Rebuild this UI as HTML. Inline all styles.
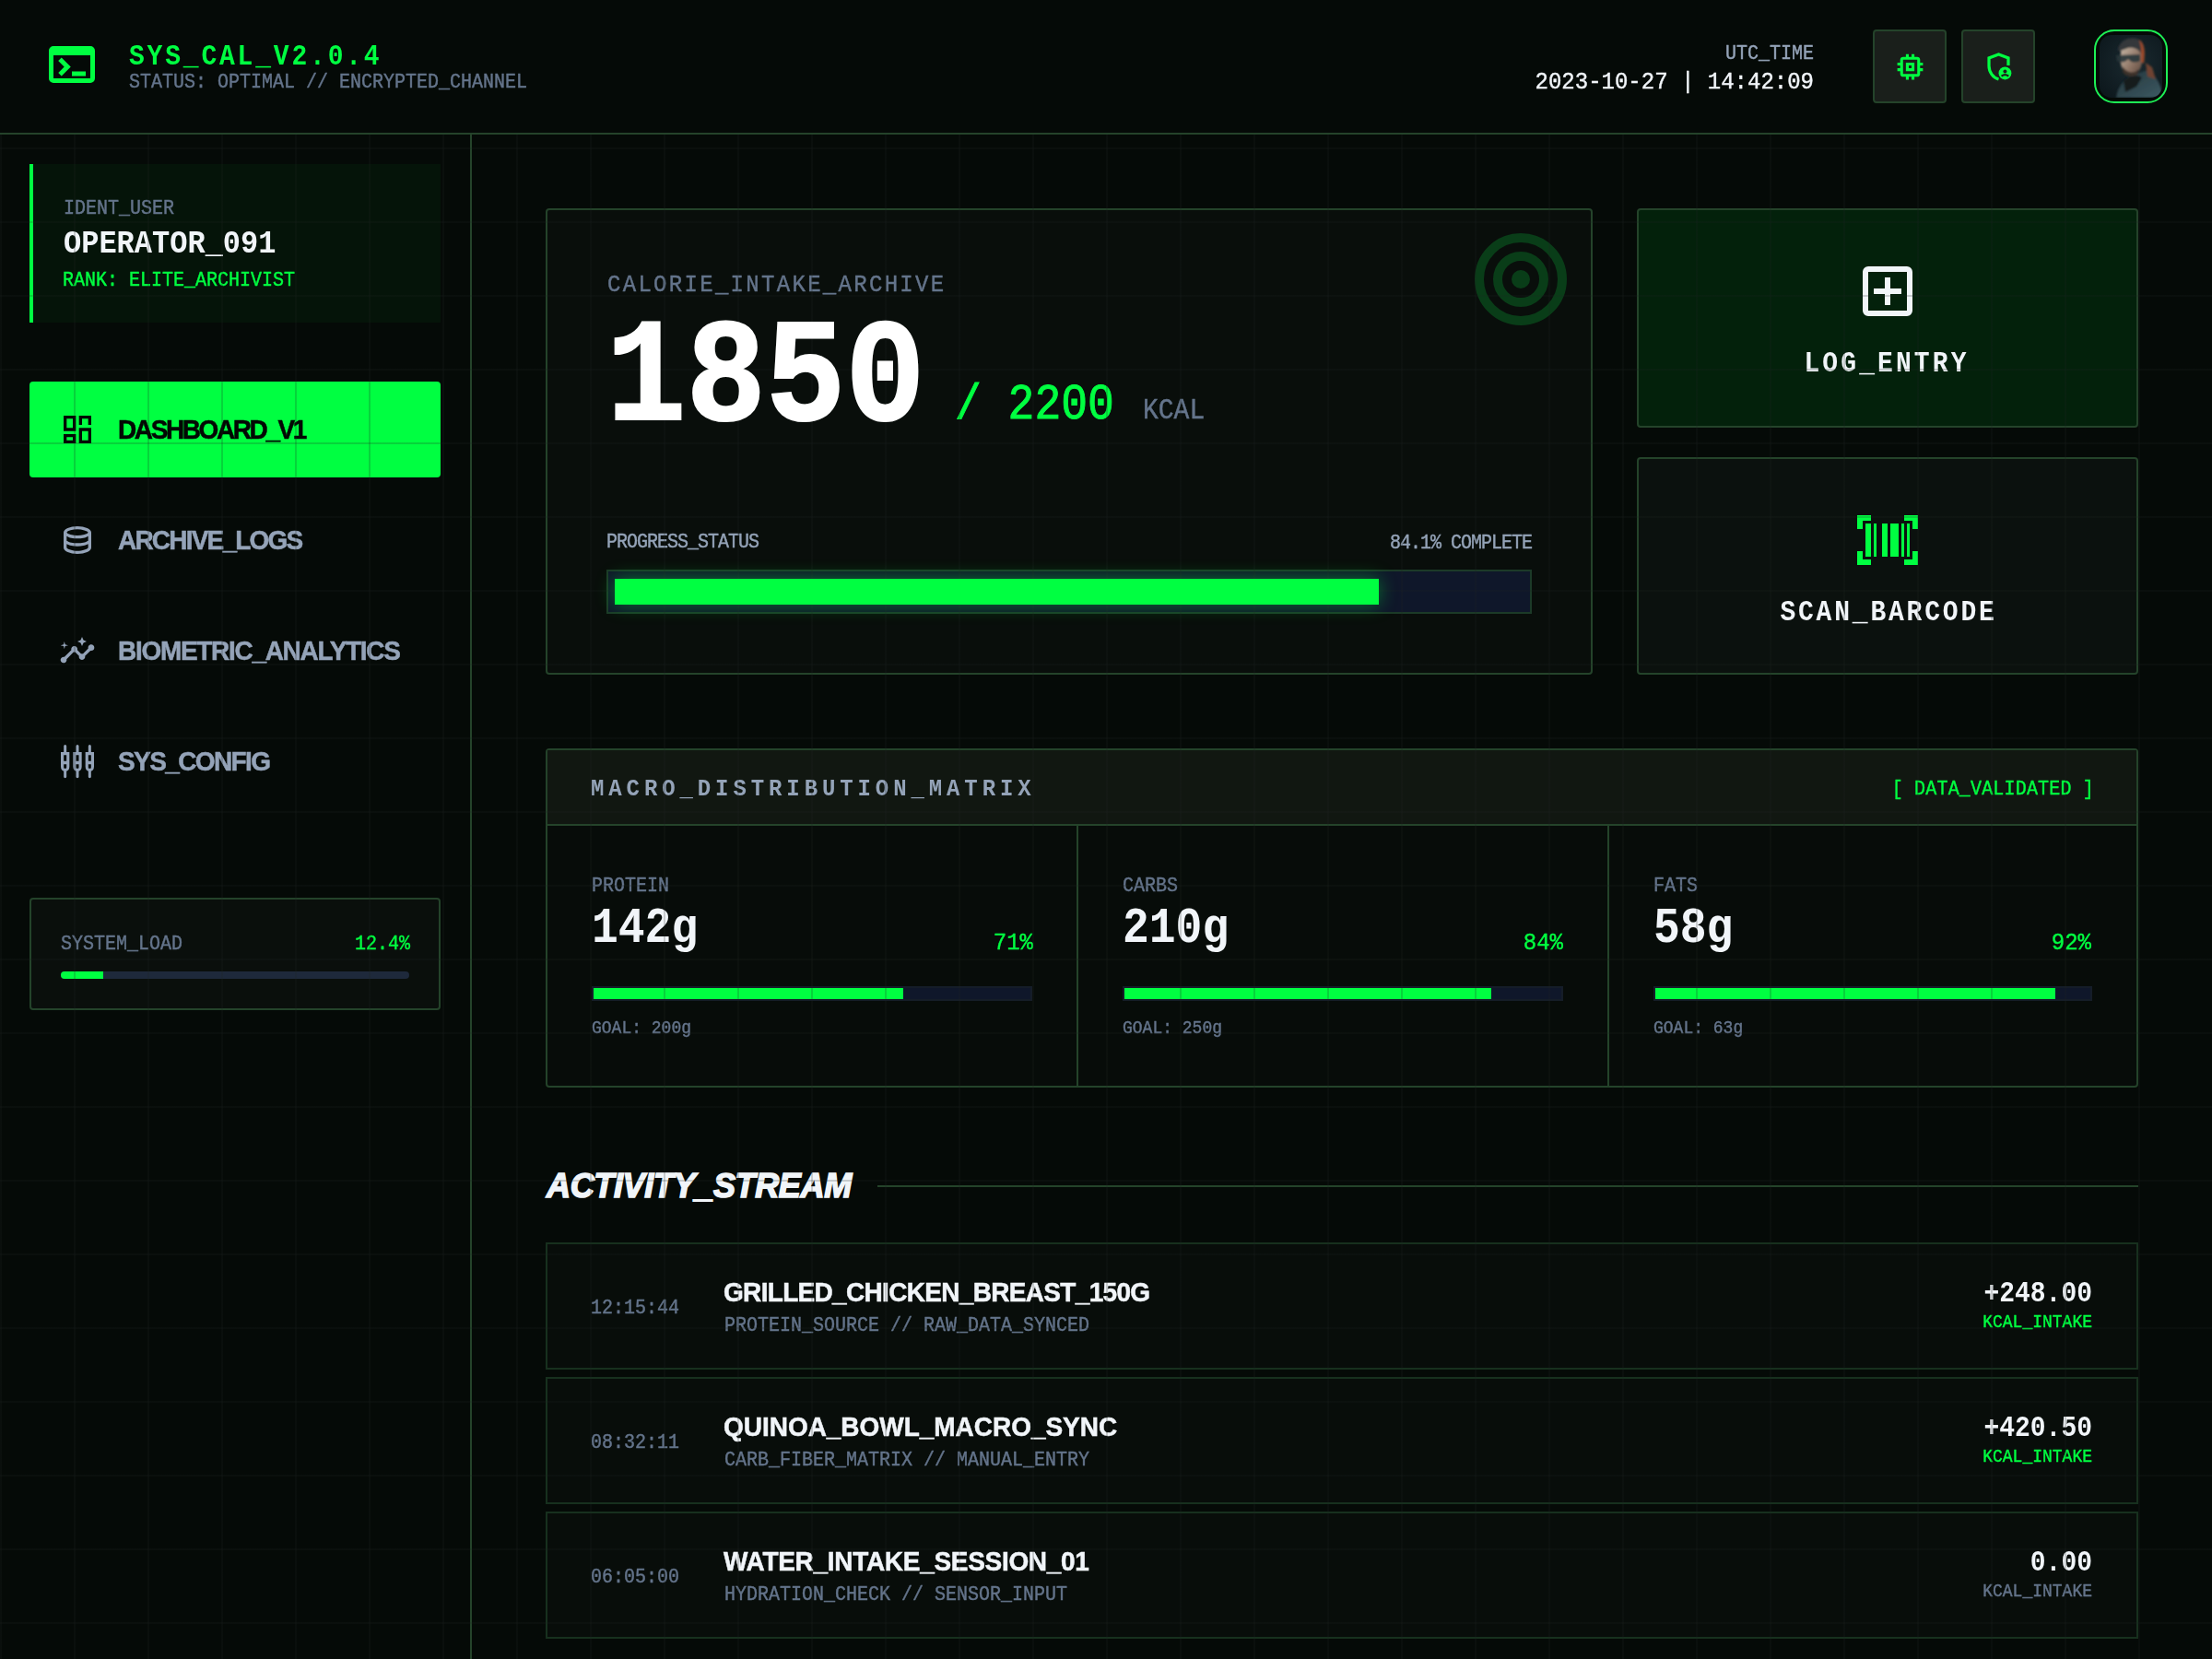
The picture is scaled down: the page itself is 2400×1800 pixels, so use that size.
<!DOCTYPE html>
<html><head><meta charset="utf-8">
<style>
html,body{margin:0;padding:0;background:#050a07;overflow:hidden;}
@media (max-width:1300px){html{zoom:0.5;}}
#root{position:relative;width:2400px;height:1800px;overflow:hidden;background:#050a07;}
.a{position:absolute;box-sizing:border-box;}
.t{position:absolute;white-space:nowrap;font-family:"Liberation Mono",monospace;}
.s{font-family:"Liberation Sans",sans-serif;}
.b{font-weight:bold;}
.g{color:#00ff41;}
.gr{color:#64748b;}
.gl{color:#94a3b8;}
.w{color:#f1f5f9;}
#grid{position:absolute;left:0;top:0;width:2400px;height:1800px;pointer-events:none;
 background-image:linear-gradient(to right, rgba(30,36,33,0.2) 0, rgba(30,36,33,0.2) 2px, transparent 2px),
 linear-gradient(to bottom, rgba(30,36,33,0.2) 0, rgba(30,36,33,0.2) 2px, transparent 2px);
 background-size:80px 80px;}
</style></head>
<body><div id="root">
<div class="a" style="left:510px;top:146px;width:2px;height:1654px;background:#24432a;"></div>
<div class="a" style="left:32px;top:178px;width:446px;height:172px;background:#051409;"></div>
<div class="a" style="left:32px;top:178px;width:4px;height:172px;background:#00ff41;"></div>
<div class="t gr" style="left:69px;top:217px;font-size:20px;line-height:20px;transform:scaleY(1.1);transform-origin:0 15px;-webkit-text-stroke-width:0.4px;">IDENT_USER</div>
<div class="t w b" style="left:69px;top:250px;font-size:32px;line-height:32px;transform:scaleY(1.1);transform-origin:0 24px;">OPERATOR_091</div>
<div class="t g" style="left:68px;top:295px;font-size:20px;line-height:20px;transform:scaleY(1.1);transform-origin:0 15px;-webkit-text-stroke-width:0.4px;">RANK: ELITE_ARCHIVIST</div>
<div class="a" style="left:32px;top:414px;width:446px;height:104px;background:#00ff41;border-radius:4px;"></div>
<div class="t s b" style="left:128px;top:453px;font-size:28px;line-height:28px;letter-spacing:-2.4px;transform:scaleY(1.04);transform-origin:0 23px;-webkit-text-stroke-width:0.5px;color:#030804;">DASHBOARD_V1</div>
<div class="t s b" style="left:128px;top:573px;font-size:28px;line-height:28px;letter-spacing:-1.8px;transform:scaleY(1.04);transform-origin:0 23px;-webkit-text-stroke-width:0.5px;color:#94a3b8;">ARCHIVE_LOGS</div>
<div class="t s b" style="left:128px;top:693px;font-size:28px;line-height:28px;letter-spacing:-1.3px;transform:scaleY(1.04);transform-origin:0 23px;-webkit-text-stroke-width:0.5px;color:#94a3b8;">BIOMETRIC_ANALYTICS</div>
<div class="t s b" style="left:128px;top:813px;font-size:28px;line-height:28px;letter-spacing:-1.6px;transform:scaleY(1.04);transform-origin:0 23px;-webkit-text-stroke-width:0.5px;color:#94a3b8;">SYS_CONFIG</div>
<svg class="a" style="left:64px;top:446px" width="40" height="40" viewBox="0 0 24 24" fill="#030804"><path d="M13 9V3h8v6Zm-10 4V3h8v10Zm10 8V11h8v10ZM3 21v-6h8v6Zm2-10h4V5H5Zm10 8h4v-6h-4Zm0-10h4V5h-4ZM5 19h4v-2H5Z"/></svg>
<svg class="a" style="left:64px;top:566px" width="40" height="40" viewBox="0 0 24 24" fill="#94a3b8"><path d="M12 21q-3.775 0-6.388-1.163Q3 18.675 3 17V7q0-1.65 2.638-2.825Q8.275 3 12 3t6.363 1.175Q21 5.35 21 7v10q0 1.675-2.612 2.837Q15.775 21 12 21Zm0-12q2.225 0 4.475-.638 2.25-.637 2.525-1.362-.275-.725-2.513-1.375Q14.25 5 12 5q-2.275 0-4.487.612Q5.3 6.225 5 7q.3.775 2.513 1.388Q9.725 9 12 9Zm0 5q1.05 0 2.025-.1.975-.1 1.863-.288.887-.187 1.675-.462.787-.275 1.437-.65v-3q-.65.375-1.437.65-.788.275-1.675.462-.888.188-1.863.288Q13.05 11 12 11t-2.05-.1q-1-.1-1.887-.288-.888-.187-1.663-.462T5 9.5v3q.625.375 1.4.65.775.275 1.663.462.887.188 1.887.288T12 14Zm0 5q1.15 0 2.338-.175 1.187-.175 2.187-.462 1-.288 1.675-.651.675-.362.8-.737V14.5q-.65.375-1.437.65-.788.275-1.675.462-.888.188-1.863.288Q13.05 16 12 16t-2.05-.1q-1-.1-1.887-.288-.888-.187-1.663-.462T5 14.5V17q.125.375.788.725.662.35 1.662.638 1 .287 2.2.462Q10.85 19 12 19Z"/></svg>
<svg class="a" style="left:64px;top:686px" width="40" height="40" viewBox="0 0 24 24" fill="#94a3b8"><path d="M21,8c-1.45,0-2.26,1.44-1.93,2.51l-3.55,3.56c-0.3-0.09-0.74-0.09-1.04,0l-2.55-2.55C12.27,10.450,11.46,9,10,9c-1.45,0-2.270,1.440-1.930,2.520l-4.56,4.55C2.44,15.74,1,16.55,1,18c0,1.1,0.9,2,2,2c1.45,0,2.26-1.44,1.93-2.51l4.55-4.56c0.3,0.09,0.74,0.09,1.04,0l2.55,2.55C12.73,16.55,13.54,18,15,18c1.45,0,2.27-1.44,1.93-2.52l3.56-3.55C21.56,12.26,23,11.45,23,10C23,8.9,22.1,8,21,8z M15,9l0.94-2.07L18,6l-2.06-0.93L15,3l-0.92,2.07L12,6l2.08,0.93L15,9z M3.5,11L4,9l2-0.5L4,8L3.5,6L3,8L1,8.5L3,9L3.5,11z"/></svg>
<svg class="a" style="left:64px;top:806px" width="40" height="40" viewBox="0 0 24 24" fill="#94a3b8"><path fill-rule="evenodd" d="M1.2000000000000002 6H6.8V15.4Q6.8 18.2 4 18.6Q1.2000000000000002 18.2 1.2000000000000002 15.4ZM3.1 7.9H4.9V11.8H3.1Z M3.1 13.9H4.9V16Q4.9 16.7 4 16.7Q3.1 16.7 3.1 16ZM9.2 6H14.8V15.4Q14.8 18.2 12 18.6Q9.2 18.2 9.2 15.4ZM11.1 7.9H12.9V11.8H11.1Z M11.1 13.9H12.9V16Q12.9 16.7 12 16.7Q11.1 16.7 11.1 16ZM17.2 6H22.8V15.4Q22.8 18.2 20 18.6Q17.2 18.2 17.2 15.4ZM19.1 7.9H20.9V11.8H19.1Z M19.1 13.9H20.9V16Q20.9 16.7 20 16.7Q19.1 16.7 19.1 16Z"/><path d="M3.1 2.1Q3.1 1.2 4 1.2Q4.9 1.2 4.9 2.1V6.4H3.1ZM3.1 18H4.9V22.2Q4.9 22.9 4 22.9Q3.1 22.9 3.1 22.2ZM11.1 2.1Q11.1 1.2 12 1.2Q12.9 1.2 12.9 2.1V6.4H11.1ZM11.1 18H12.9V22.2Q12.9 22.9 12 22.9Q11.1 22.9 11.1 22.2ZM19.1 2.1Q19.1 1.2 20 1.2Q20.9 1.2 20.9 2.1V6.4H19.1ZM19.1 18H20.9V22.2Q20.9 22.9 20 22.9Q19.1 22.9 19.1 22.2Z"/></svg>
<div class="a" style="left:32px;top:974px;width:446px;height:122px;border:2px solid #24432a;border-radius:4px;background:#0a0f0c;"></div>
<div class="t gr" style="left:66px;top:1015px;font-size:20px;line-height:20px;transform:scaleY(1.1);transform-origin:0 15px;-webkit-text-stroke-width:0.4px;">SYSTEM_LOAD</div>
<div class="t g" style="right:1955px;top:1015px;font-size:20px;line-height:20px;transform:scaleY(1.1);transform-origin:0 15px;-webkit-text-stroke-width:0.4px;">12.4%</div>
<div class="a" style="left:66px;top:1054px;width:378px;height:8px;border-radius:4px;background:#1e293b;overflow:hidden;"></div>
<div class="a" style="left:66px;top:1054px;width:46px;height:8px;border-radius:4px 0 0 4px;background:#00ff41;"></div>
<div class="a" style="left:592px;top:226px;width:1136px;height:506px;border:2px solid #24432a;border-radius:4px;background:#090e0b;"></div>
<svg class="a" style="left:1590px;top:243px" width="120" height="120" viewBox="0 0 24 24" fill="none" stroke="#093d18" stroke-width="2"><circle cx="12" cy="12" r="9"/><circle cx="12" cy="12" r="5"/><circle cx="12" cy="12" r="1" fill="#093d18"/></svg>
<div class="t gr" style="left:659px;top:298px;font-size:24px;line-height:24px;letter-spacing:2.3px;transform:scaleY(1.1);transform-origin:0 18px;-webkit-text-stroke-width:0.4px;">CALORIE_INTAKE_ARCHIVE</div>
<div class="t g" style="left:1036px;top:417px;font-size:48px;line-height:48px;transform:scaleY(1.1);transform-origin:0 37px;-webkit-text-stroke-width:0.4px;-webkit-text-stroke-width:0.9px;">/ 2200</div>
<div class="t gr" style="left:1240px;top:433px;font-size:28px;line-height:28px;transform:scaleY(1.1);transform-origin:0 21px;-webkit-text-stroke-width:0.4px;">KCAL</div>
<div class="t gl" style="left:658px;top:579px;font-size:20px;line-height:20px;letter-spacing:-1px;transform:scaleY(1.1);transform-origin:0 15px;-webkit-text-stroke-width:0.4px;">PROGRESS_STATUS</div>
<div class="t gl" style="right:738px;top:580px;font-size:20px;line-height:20px;letter-spacing:-1px;transform:scaleY(1.1);transform-origin:0 15px;-webkit-text-stroke-width:0.4px;">84.1% COMPLETE</div>
<div class="a" style="left:658px;top:618px;width:1004px;height:48px;border:2px solid #1c3a28;background:#0f172a;"></div>
<div class="a" style="left:1776px;top:226px;width:544px;height:238px;border:2px solid #24432a;border-radius:4px;background:#03210b;"></div>
<svg class="a" style="left:2012px;top:280px" width="72" height="72" viewBox="0 0 24 24" fill="#f1f5f9"><path d="M11 17h2v-4h4v-2h-4V7h-2v4H7v2h4Zm-6 4q-.825 0-1.413-.587Q3 19.825 3 19V5q0-.825.587-1.413Q4.175 3 5 3h14q.825 0 1.413.587Q21 4.175 21 5v14q0 .825-.587 1.413Q19.825 21 19 21Zm0-2h14V5H5v14Z"/></svg>
<div class="t w b" style="left:1447px;width:1200px;text-align:center;top:382px;font-size:28px;line-height:28px;letter-spacing:3.1px;transform:scaleY(1.1);transform-origin:0 21px;">LOG_ENTRY</div>
<div class="a" style="left:1776px;top:496px;width:544px;height:236px;border:2px solid #24432a;border-radius:4px;background:#0b110e;"></div>
<svg class="a" style="left:2012px;top:550px" width="72" height="72" viewBox="0 0 24 24" fill="#00ff41"><path d="M1 21v-5h2v3h3v2Zm17 0v-2h3v-3h2v5ZM4 18V6h2v12Zm3 0V6h1v12Zm3 0V6h2v12Zm3 0V6h3v12Zm4 0V6h1v12Zm2 0V6h1v12ZM1 8V3h5v2H3v3Zm20 0V5h-3V3h5v5Z"/></svg>
<div class="t w b" style="left:1449px;width:1200px;text-align:center;top:652px;font-size:28px;line-height:28px;letter-spacing:2.8px;transform:scaleY(1.1);transform-origin:0 21px;">SCAN_BARCODE</div>
<div class="a" style="left:592px;top:812px;width:1728px;height:368px;border:2px solid #24432a;border-radius:4px;background:#070c09;"></div>
<div class="a" style="left:594px;top:814px;width:1724px;height:82px;background:#111711;border-bottom:2px solid #24432a;"></div>
<div class="a" style="left:1168px;top:896px;width:2px;height:282px;background:#24432a;"></div>
<div class="a" style="left:1744px;top:896px;width:2px;height:282px;background:#24432a;"></div>
<div class="t gl b" style="left:641px;top:845px;font-size:24px;line-height:24px;letter-spacing:4.9px;transform:scaleY(1.1);transform-origin:0 18px;">MACRO_DISTRIBUTION_MATRIX</div>
<div class="t g" style="right:128px;top:847px;font-size:20px;line-height:20px;letter-spacing:0.18px;transform:scaleY(1.1);transform-origin:0 15px;-webkit-text-stroke-width:0.4px;">[ DATA_VALIDATED ]</div>
<div class="t gr" style="left:642px;top:952px;font-size:20px;line-height:20px;transform:scaleY(1.1);transform-origin:0 15px;-webkit-text-stroke-width:0.4px;">PROTEIN</div>
<div class="t w b" style="left:642px;top:985px;font-size:48px;line-height:48px;transform:scaleY(1.1);transform-origin:0 37px;">142g</div>
<div class="t g" style="right:1279px;top:1012px;font-size:24px;line-height:24px;transform:scaleY(1.1);transform-origin:0 18px;-webkit-text-stroke-width:0.4px;">71%</div>
<div class="a" style="left:642px;top:1070px;width:478px;height:16px;background:#0f172a;border:2px solid #151d28;"></div>
<div class="a" style="left:644px;top:1072px;width:336px;height:12px;background:#00ff41;"></div>
<div class="t gr" style="left:642px;top:1107px;font-size:18px;line-height:18px;transform:scaleY(1.1);transform-origin:0 14px;-webkit-text-stroke-width:0.4px;">GOAL: 200g</div>
<div class="t gr" style="left:1218px;top:952px;font-size:20px;line-height:20px;transform:scaleY(1.1);transform-origin:0 15px;-webkit-text-stroke-width:0.4px;">CARBS</div>
<div class="t w b" style="left:1218px;top:985px;font-size:48px;line-height:48px;transform:scaleY(1.1);transform-origin:0 37px;">210g</div>
<div class="t g" style="right:704px;top:1012px;font-size:24px;line-height:24px;transform:scaleY(1.1);transform-origin:0 18px;-webkit-text-stroke-width:0.4px;">84%</div>
<div class="a" style="left:1218px;top:1070px;width:478px;height:16px;background:#0f172a;border:2px solid #151d28;"></div>
<div class="a" style="left:1220px;top:1072px;width:398px;height:12px;background:#00ff41;"></div>
<div class="t gr" style="left:1218px;top:1107px;font-size:18px;line-height:18px;transform:scaleY(1.1);transform-origin:0 14px;-webkit-text-stroke-width:0.4px;">GOAL: 250g</div>
<div class="t gr" style="left:1794px;top:952px;font-size:20px;line-height:20px;transform:scaleY(1.1);transform-origin:0 15px;-webkit-text-stroke-width:0.4px;">FATS</div>
<div class="t w b" style="left:1794px;top:985px;font-size:48px;line-height:48px;transform:scaleY(1.1);transform-origin:0 37px;">58g</div>
<div class="t g" style="right:131px;top:1012px;font-size:24px;line-height:24px;transform:scaleY(1.1);transform-origin:0 18px;-webkit-text-stroke-width:0.4px;">92%</div>
<div class="a" style="left:1794px;top:1070px;width:476px;height:16px;background:#0f172a;border:2px solid #151d28;"></div>
<div class="a" style="left:1796px;top:1072px;width:434px;height:12px;background:#00ff41;"></div>
<div class="t gr" style="left:1794px;top:1107px;font-size:18px;line-height:18px;transform:scaleY(1.1);transform-origin:0 14px;-webkit-text-stroke-width:0.4px;">GOAL: 63g</div>
<div class="t s w b" style="left:593px;top:1269px;font-size:36px;line-height:36px;letter-spacing:-0.35px;font-style:italic;-webkit-text-stroke:1.6px #f1f5f9;">ACTIVITY_STREAM</div>
<div class="a" style="left:952px;top:1286px;width:1368px;height:2px;background:#24432a;"></div>
<div class="a" style="left:592px;top:1348px;width:1728px;height:138px;border:2px solid #17301e;background:#080d0a;"></div>
<div class="t gr" style="left:641px;top:1410px;font-size:20px;line-height:20px;transform:scaleY(1.1);transform-origin:0 15px;-webkit-text-stroke-width:0.4px;">12:15:44</div>
<div class="t s w b" style="left:785px;top:1389px;font-size:28px;line-height:28px;letter-spacing:-0.68px;transform:scaleY(1.04);transform-origin:0 23px;-webkit-text-stroke-width:0.5px;">GRILLED_CHICKEN_BREAST_150G</div>
<div class="t gr" style="left:786px;top:1429px;font-size:20px;line-height:20px;transform:scaleY(1.1);transform-origin:0 15px;-webkit-text-stroke-width:0.4px;">PROTEIN_SOURCE // RAW_DATA_SYNCED</div>
<div class="t w b" style="right:130px;top:1391px;font-size:28px;line-height:28px;transform:scaleY(1.1);transform-origin:0 21px;">+248.00</div>
<div class="t g" style="right:130px;top:1426px;font-size:18px;line-height:18px;transform:scaleY(1.1);transform-origin:0 14px;-webkit-text-stroke-width:0.4px;">KCAL_INTAKE</div>
<div class="a" style="left:592px;top:1494px;width:1728px;height:138px;border:2px solid #17301e;background:#080d0a;"></div>
<div class="t gr" style="left:641px;top:1556px;font-size:20px;line-height:20px;transform:scaleY(1.1);transform-origin:0 15px;-webkit-text-stroke-width:0.4px;">08:32:11</div>
<div class="t s w b" style="left:785px;top:1535px;font-size:28px;line-height:28px;letter-spacing:-0.03px;transform:scaleY(1.04);transform-origin:0 23px;-webkit-text-stroke-width:0.5px;">QUINOA_BOWL_MACRO_SYNC</div>
<div class="t gr" style="left:786px;top:1575px;font-size:20px;line-height:20px;transform:scaleY(1.1);transform-origin:0 15px;-webkit-text-stroke-width:0.4px;">CARB_FIBER_MATRIX // MANUAL_ENTRY</div>
<div class="t w b" style="right:130px;top:1537px;font-size:28px;line-height:28px;transform:scaleY(1.1);transform-origin:0 21px;">+420.50</div>
<div class="t g" style="right:130px;top:1572px;font-size:18px;line-height:18px;transform:scaleY(1.1);transform-origin:0 14px;-webkit-text-stroke-width:0.4px;">KCAL_INTAKE</div>
<div class="a" style="left:592px;top:1640px;width:1728px;height:138px;border:2px solid #17301e;background:#080d0a;"></div>
<div class="t gr" style="left:641px;top:1702px;font-size:20px;line-height:20px;transform:scaleY(1.1);transform-origin:0 15px;-webkit-text-stroke-width:0.4px;">06:05:00</div>
<div class="t s w b" style="left:785px;top:1681px;font-size:28px;line-height:28px;letter-spacing:-0.3px;transform:scaleY(1.04);transform-origin:0 23px;-webkit-text-stroke-width:0.5px;">WATER_INTAKE_SESSION_01</div>
<div class="t gr" style="left:786px;top:1721px;font-size:20px;line-height:20px;transform:scaleY(1.1);transform-origin:0 15px;-webkit-text-stroke-width:0.4px;">HYDRATION_CHECK // SENSOR_INPUT</div>
<div class="t w b" style="right:130px;top:1683px;font-size:28px;line-height:28px;transform:scaleY(1.1);transform-origin:0 21px;">0.00</div>
<div class="t gr" style="right:130px;top:1718px;font-size:18px;line-height:18px;transform:scaleY(1.1);transform-origin:0 14px;-webkit-text-stroke-width:0.4px;">KCAL_INTAKE</div>
<div id="grid"></div>
<div class="a" style="left:667px;top:628px;width:829px;height:28px;background:#00ff41;box-shadow:0 0 20px rgba(0,255,65,0.4);"></div>
<div class="t w b" style="left:658px;top:345px;font-size:144px;line-height:144px;transform:scaleY(1.11);transform-origin:0 110px;color:#ffffff;-webkit-text-stroke:2px #ffffff;">1850</div>
<div class="a" style="left:0px;top:0px;width:2400px;height:146px;background:#050a07;border-bottom:2px solid #24432a;"></div>
<svg class="a" style="left:48px;top:40px" width="60" height="60" viewBox="0 0 24 24" fill="#00ff41"><path d="M4 20q-.825 0-1.412-.587Q2 18.825 2 18V6q0-.825.588-1.412Q3.175 4 4 4h16q.825 0 1.413.588Q22 5.175 22 6v12q0 .825-.587 1.413Q20.825 20 20 20Zm0-2h16V8H4Zm3.5-1-1.4-1.4L8.675 13l-2.6-2.6L7.5 9l4 4Zm4.5 0v-2h6v2Z"/></svg>
<div class="t g b" style="left:140px;top:49px;font-size:28px;line-height:28px;letter-spacing:2.8px;transform:scaleY(1.1);transform-origin:0 21px;">SYS_CAL_V2.0.4</div>
<div class="t gr" style="left:140px;top:80px;font-size:20px;line-height:20px;transform:scaleY(1.1);transform-origin:0 15px;-webkit-text-stroke-width:0.4px;">STATUS: OPTIMAL // ENCRYPTED_CHANNEL</div>
<div class="t gl" style="right:432px;top:49px;font-size:20px;line-height:20px;transform:scaleY(1.1);transform-origin:0 15px;-webkit-text-stroke-width:0.4px;">UTC_TIME</div>
<div class="t w" style="right:432px;top:78px;font-size:24px;line-height:24px;transform:scaleY(1.1);transform-origin:0 18px;-webkit-text-stroke-width:0.4px;">2023-10-27 | 14:42:09</div>
<div class="a" style="left:2032px;top:32px;width:80px;height:80px;border:2px solid #24432a;border-radius:4px;background:#1a1f1b;"></div>
<div class="a" style="left:2128px;top:32px;width:80px;height:80px;border:2px solid #24432a;border-radius:4px;background:#1a1f1b;"></div>
<svg class="a" style="left:2054px;top:54px" width="37" height="37" viewBox="0 0 24 24" fill="#00ff41"><path d="M9 15V9h6v6Zm2-2h2v-2h-2Zm-2 8v-2H7q-.825 0-1.412-.587Q5 17.825 5 17v-2H3v-2h2v-2H3V9h2V7q0-.825.588-1.412Q6.175 5 7 5h2V3h2v2h2V3h2v2h2q.825 0 1.413.588Q19 6.175 19 7v2h2v2h-2v2h2v2h-2v2q0 .825-.587 1.413Q17.825 19 17 19h-2v2h-2v-2h-2v2Zm8-4V7H7v10Z"/></svg>
<svg class="a" style="left:2150px;top:54px" width="37" height="37" viewBox="0 0 24 24"><path d="M18.8 11V5.8L12 3.2 5.2 5.8v5.6c0 4.3 2.8 8.2 6.8 9.4" fill="none" stroke="#00ff41" stroke-width="2.1" stroke-linejoin="miter"/><circle cx="16.5" cy="16.5" r="4.5" fill="#00ff41"/><circle cx="16.5" cy="15.2" r="1.3" fill="#1a1f1b"/><path d="M14 18.6q2.5-2 5 0" stroke="#1a1f1b" stroke-width="1.4" fill="none"/></svg>
<div class="a" style="left:2272px;top:32px;width:80px;height:80px;border:2.5px solid #1ef055;border-radius:22px;background:#050a07;"></div>
<svg class="a" style="left:2278px;top:38px" width="68" height="68" viewBox="0 0 68 68"><defs><clipPath id="av"><rect width="68" height="68" rx="13"/></clipPath>
<filter id="bl" x="-10%" y="-10%" width="120%" height="120%"><feGaussianBlur stdDeviation="0.8"/></filter>
<radialGradient id="avbg" cx="0.55" cy="0.45" r="0.75"><stop offset="0" stop-color="#1a2a30"/><stop offset="1" stop-color="#0c161b"/></radialGradient>
<linearGradient id="jk" x1="0" y1="0" x2="1" y2="1"><stop offset="0" stop-color="#22343a"/><stop offset="1" stop-color="#3d5a63"/></linearGradient>
<linearGradient id="fc" x1="0" y1="0" x2="1" y2="1"><stop offset="0" stop-color="#cdbfae"/><stop offset="0.6" stop-color="#8e7565"/><stop offset="1" stop-color="#5a463c"/></linearGradient></defs>
<g clip-path="url(#av)"><rect width="68" height="68" fill="url(#avbg)"/>
<g filter="url(#bl)">
<path d="M18 68 C20 54 28 46 40 42 L52 38 C62 44 68 56 68 68Z" fill="url(#jk)"/>
<path d="M50 30 L57 35 L61 48 L52 45Z" fill="#6e4230"/>
<path d="M26 50 C32 44 40 42 46 46 L40 56 L28 62Z" fill="#141c1f"/>
<path d="M23 19 C23 11 29 8 35 8 C42 8 46 12 46 20 L46 30 C45 38 40 43 34 43 C28 43 24 37 23 31Z" fill="url(#fc)"/>
<path d="M20 17 C21 6 31 2 40 4 C47 6 49 12 48 20 L45 21 C43 15 37 13 31 14 L23 17Z" fill="#34393b"/>
<path d="M43 5 C49 9 50 18 48 31 L45 29 L45 14Z" fill="#9a4a2a"/>
<path d="M18 22 L44 21 L44 28 C40 30 36 30 33 28 L31 26 L29 28 C25 30 21 30 19 28Z" fill="#28363b" opacity="0.9"/>
<path d="M25 34 C29 41 38 43 42 37 L42 42 C38 46 29 46 25 40Z" fill="#3e322b"/>
</g></g></g></svg>
</div></body></html>
